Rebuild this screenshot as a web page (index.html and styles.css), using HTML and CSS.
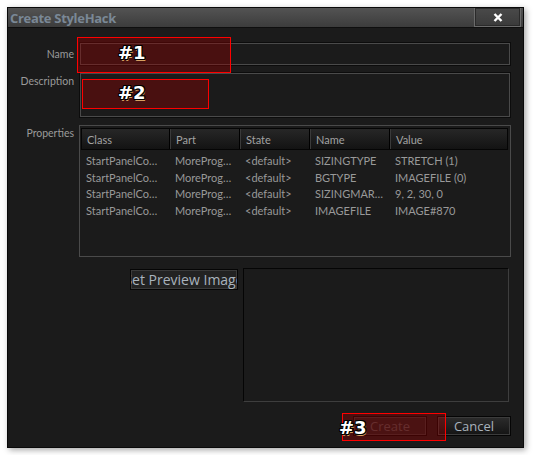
FILE: index.html
```html
<!DOCTYPE html>
<html>
<head>
<meta charset="utf-8">
<link rel="stylesheet" href="styles.css">
</head>
<body>
<div class="window">
  <div class="titlebar">
    <span class="title">Create StyleHack</span>
    <div class="close">
      <svg width="10" height="9" viewBox="0 0 10 9"><path d="M1.5 1 L8.5 8 M8.5 1 L1.5 8" stroke="#fff" stroke-width="2.4" fill="none"/></svg>
    </div>
  </div>
  <div class="content">
    <div class="form">
      <div class="lbl lbl-name">Name</div>
      <div class="field input"></div>
      <div class="lbl lbl-desc">Description</div>
      <div class="field textarea"></div>
      <div class="lbl lbl-props">Properties</div>
      <div class="table">
        <div class="thead">
          <div class="th c1">Class</div>
          <div class="th c2">Part</div>
          <div class="th c3">State</div>
          <div class="th c4">Name</div>
          <div class="th c5">Value</div>
        </div>
        <div class="tbody">
          <div class="tr"><div class="td c1">StartPanelCo…</div><div class="td c2">MoreProg…</div><div class="td c3">&lt;default&gt;</div><div class="td c4">SIZINGTYPE</div><div class="td c5">STRETCH (1)</div></div>
          <div class="tr"><div class="td c1">StartPanelCo…</div><div class="td c2">MoreProg…</div><div class="td c3">&lt;default&gt;</div><div class="td c4">BGTYPE</div><div class="td c5">IMAGEFILE (0)</div></div>
          <div class="tr"><div class="td c1">StartPanelCo…</div><div class="td c2">MoreProg…</div><div class="td c3">&lt;default&gt;</div><div class="td c4">SIZINGMAR…</div><div class="td c5">9, 2, 30, 0</div></div>
          <div class="tr"><div class="td c1">StartPanelCo…</div><div class="td c2">MoreProg…</div><div class="td c3">&lt;default&gt;</div><div class="td c4">IMAGEFILE</div><div class="td c5">IMAGE#870</div></div>
        </div>
      </div>
    </div>
    <div class="preview-row">
      <div class="preview-btn"><span>Set Preview Image</span></div>
      <div class="preview-box"></div>
    </div>
    <div class="actions">
      <div class="btn btn-disabled">Create</div>
      <div class="btn">Cancel</div>
    </div>
  </div>
  <div class="mark m1"><span class="tag">#1</span></div>
  <div class="mark m2"><span class="tag">#2</span></div>
  <div class="mark m3"><span class="tag">#3</span></div>
</div>
</body>
</html>
```

FILE: styles.css
```css
* { box-sizing: border-box; }
html, body { margin: 0; padding: 0; background: #ffffff; }
body { padding: 7px; font-family: "Lato", "Noto Sans", sans-serif; }

.window {
  position: relative;
  width: 517px;
  height: 441px;
  background: #1b1b1b;
  border: 1px solid #0a0a0a;
  box-shadow: 2px 2px 6px rgba(0,0,0,0.35);
}

.titlebar {
  height: 20px;
  display: flex;
  align-items: center;
  justify-content: space-between;
  background: linear-gradient(#535353, #3c3c3c);
  border-bottom: 1px solid #0e0e0e;
}
.title {
  padding-left: 2px;
  font-family: "Open Sans", "Noto Sans", sans-serif;
  font-weight: 700;
  font-size: 13px;
  color: #7a8896;
  letter-spacing: -0.3px;
}
.close {
  align-self: flex-start;
  margin-right: 2px;
  width: 47px;
  height: 19px;
  border: 1px solid #6a6a6a;
  border-top: none;
  background: linear-gradient(#4a4a4a, #3a3a3a);
  display: flex;
  align-items: center;
  justify-content: center;
  box-shadow: inset 0 0 0 1px #2a2a2a;
}

.content {
  padding: 15px 12px 0 0;
}

.form {
  display: grid;
  grid-template-columns: 66px 430px;
  column-gap: 6px;
  row-gap: 8px;
}
.lbl {
  text-align: right;
  font-size: 10.5px;
  color: #9a9a9a;
}
.lbl-name { align-self: center; }
.lbl-desc { padding-top: 2px; }
.lbl-props { padding-top: 2px; }

.field {
  background: #1b1b1b;
  border: 1px solid #4a4a4a;
  box-shadow: 0 0 0 1px #0c0c0c;
}
.input { height: 22px; }
.textarea { height: 44px; }

.table {
  margin-left: -1px;
  width: 432px;
  height: 132px;
  border: 1px solid #4a4a4a;
  padding: 2px 2px 0 1px;
  font-size: 11px;
}
.thead {
  display: flex;
  height: 22px;
  background: linear-gradient(#272727, #131313);
  border: 1px solid #050505;
}
.th {
  display: flex;
  align-items: center;
  padding-left: 5px;
  color: #a2a2a2;
  border-right: 1px solid #3a3a3a;
  box-shadow: inset -1px 0 0 #000;
}
.th.c5 { border-right: none; box-shadow: none; }
.c1 { width: 89px; }
.c2 { width: 70px; }
.c3 { width: 70px; }
.c4 { width: 80px; }
.c5 { flex: 1; }

.tbody { padding-top: 2px; }
.tr { display: flex; height: 16.7px; align-items: center; }
.td {
  padding-left: 5px;
  color: #999999;
  white-space: nowrap;
  overflow: hidden;
}

.preview-row {
  display: flex;
  margin-top: 11px;
  padding-left: 122px;
  gap: 5px;
  align-items: flex-start;
}
.preview-btn {
  margin-top: 1px;
  width: 108px;
  height: 21px;
  display: flex;
  align-items: center;
  justify-content: center;
  overflow: hidden;
  white-space: nowrap;
  border: 1px solid #050505;
  background: #222;
  box-shadow: inset 0 0 0 1px #3a3a3a;
  font-family: "Open Sans", "Noto Sans", sans-serif;
  font-size: 14px;
  color: #a9b3bd;
}
.preview-btn span { flex: none; }
.preview-box {
  width: 266px;
  height: 134px;
  border-top: 1px solid #050505;
  border-left: 1px solid #050505;
  border-right: 1px solid #3e3e3e;
  border-bottom: 1px solid #3e3e3e;
}

.actions {
  display: flex;
  justify-content: flex-end;
  gap: 10px;
  margin-top: 14px;
}
.btn {
  width: 74px;
  height: 20px;
  display: flex;
  align-items: center;
  justify-content: center;
  font-family: "Open Sans", "Noto Sans", sans-serif;
  font-size: 13px;
  color: #a8b2bc;
  border: 1px solid #050505;
  background: linear-gradient(#2c2c2c, #141414);
  box-shadow: inset 0 0 0 1px #3c3c3c;
}
.btn-disabled {
  color: #4a4a4a;
  background: #1e1e1e;
  box-shadow: inset 0 0 0 1px #333;
}

.mark {
  position: absolute;
  border: 1.5px solid #ff0000;
  background: rgba(150, 0, 0, 0.38);
}
.tag {
  position: absolute;
  font-family: "DejaVu Sans", sans-serif;
  font-weight: 700;
  font-size: 18px;
  line-height: 1;
  color: #ffffff;
  text-shadow:
    -1px -1px 0 #000, 1px -1px 0 #000, -1px 1px 0 #000, 1px 1px 0 #000,
    0 -1px 0 #000, 0 1px 0 #000, -1px 0 0 #000, 1px 0 0 #000,
    1px 2px 0 #d8a060;
}
.m1 { left: 69px; top: 29px; width: 154px; height: 36px; }
.m1 .tag { left: 40px; top: 6px; }
.m2 { left: 74px; top: 71px; width: 127px; height: 30px; }
.m2 .tag { left: 35px; top: 4px; }
.m3 { left: 334px; top: 405px; width: 104px; height: 28px; }
.m3 .tag { left: -4px; top: 5px; }
```
